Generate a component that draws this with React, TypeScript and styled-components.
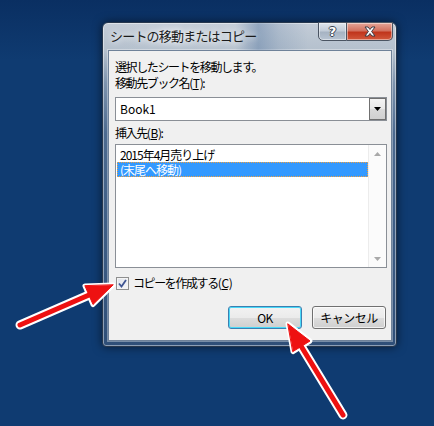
import React from "react";
import styled, { createGlobalStyle } from "styled-components";

const Global = createGlobalStyle`
  html, body { margin: 0; padding: 0; background: #0f3b71; }
  body { font-family: "Noto Sans CJK JP", "Noto Sans", sans-serif; }
`;

const Desktop = styled.div`
  position: relative;
  width: 434px;
  height: 426px;
  overflow: hidden;
  background: linear-gradient(to bottom, #0a2f62 0px, #0f3b71 60px, #0f3b71 100%);
  padding: 22px 0 0 102px;
  box-sizing: border-box;
`;

const Window = styled.div`
  width: 295px;
  height: 325px;
  box-sizing: border-box;
  display: flex;
  flex-direction: column;
  border: 1px solid #26374d;
  border-radius: 6px 6px 4px 4px;
  background: linear-gradient(
    to bottom,
    #c3ccd7 0px,
    #b4c0cd 28px,
    #7d93ad 60px,
    #4d6b90 110px,
    #3e5e86 200px,
    #2f4f78 100%
  );
  box-shadow: 0 0 10px rgba(0, 0, 0, 0.55), inset 0 0 0 1px rgba(255, 255, 255, 0.45);
  padding: 0 4px 5px 5px;
`;

const TitleBar = styled.div`
  height: 27px;
  display: flex;
  align-items: flex-start;
  position: relative;
  background: linear-gradient(
    to right,
    rgba(255, 255, 255, 0) 0%,
    rgba(255, 255, 255, 0.05) 45%,
    rgba(60, 100, 150, 0.35) 53%,
    rgba(60, 100, 150, 0.15) 60%,
    rgba(255, 255, 255, 0) 70%
  );
  margin: 0 -4px 0 -5px;
  padding: 0 3px 0 5px;
`;

const Title = styled.div`
  flex: 1;
  padding: 5px 0 0 2px;
  font-size: 13px;
  line-height: 16px;
  color: #1b1b1b;
  letter-spacing: -0.8px;
  text-shadow: 0 0 6px #ffffff, 0 0 10px #ffffff;
`;

const CaptionButtons = styled.div`
  display: flex;
  margin-top: -1px;
`;

const CaptionButton = styled.div<{ $close?: boolean }>`
  width: ${(p) => (p.$close ? 46 : 29)}px;
  height: 19px;
  box-sizing: border-box;
  display: flex;
  align-items: center;
  justify-content: center;
  border: 1px solid #4a5462;
  border-left-width: ${(p) => (p.$close ? 0 : 1)}px;
  border-radius: ${(p) => (p.$close ? "0 0 5px 0" : "0 0 0 5px")};
  background: ${(p) =>
    p.$close
      ? "linear-gradient(to bottom, #e4a597 0%, #d2715f 45%, #c0351c 55%, #d2583c 100%)"
      : "linear-gradient(to bottom, #dfe5ec 0%, #c2ccd8 45%, #a6b3c3 55%, #b8c4d2 100%)"};
  box-shadow: inset 0 0 0 1px rgba(255, 255, 255, 0.45);
  color: #ffffff;
  font-family: "DejaVu Sans", sans-serif;
  font-weight: bold;
  font-size: 13px;
  line-height: 13px;
  text-shadow: 1px 0 0 #3a4350, -1px 0 0 #3a4350, 0 1px 0 #3a4350, 0 -1px 0 #3a4350;
`;

const Client = styled.div`
  flex: 1;
  display: flex;
  flex-direction: column;
  background: #f0f0f0;
  border: 1px solid #6f8299;
  box-shadow: 0 0 0 1px rgba(255, 255, 255, 0.35);
  padding: 8px 4px 0 6px;
  font-size: 12px;
  color: #000;
`;

const Label = styled.div<{ $mt?: number }>`
  height: 16px;
  line-height: 16px;
  letter-spacing: -1.4px;
  margin-top: ${(p) => p.$mt ?? 0}px;
  white-space: nowrap;
`;

const U = styled.span`
  text-decoration: underline;
  padding: 0 1px;
`;

const Combo = styled.div`
  margin-top: 6px;
  height: 24px;
  box-sizing: border-box;
  border: 1px solid #8a8f96;
  background: #ffffff;
  display: flex;
  align-items: stretch;
  padding: 0 0 0 4px;
`;

const ComboText = styled.div`
  flex: 1;
  line-height: 22px;
  font-size: 12px;
`;

const DropButton = styled.div`
  width: 17px;
  box-sizing: border-box;
  border: 1px solid #707070;
  background: linear-gradient(to bottom, #f4f4f4 0%, #e8e8e8 50%, #dadada 51%, #d0d0d0 100%);
  display: flex;
  align-items: center;
  justify-content: center;
`;

const ListBox = styled.div`
  margin-top: 3px;
  height: 124px;
  box-sizing: border-box;
  border: 1px solid #8a8f96;
  background: #ffffff;
  display: flex;
`;

const Items = styled.div`
  flex: 1;
  padding: 2px 0 0 1px;
`;

const Item = styled.div<{ $selected?: boolean }>`
  height: 15px;
  box-sizing: border-box;
  line-height: 13px;
  overflow: hidden;
  padding-left: 2px;
  letter-spacing: -1px;
  white-space: nowrap;
  color: ${(p) => (p.$selected ? "#ffffff" : "#000000")};
  background: ${(p) => (p.$selected ? "#3399ff" : "transparent")};
  border: 1px ${(p) => (p.$selected ? "dotted #f0a040" : "solid transparent")};
`;

const ScrollBar = styled.div`
  width: 17px;
  background: #fbfbfb;
  border-left: 1px solid #ececec;
  display: flex;
  flex-direction: column;
  justify-content: space-between;
`;

const ScrollArrow = styled.div`
  height: 17px;
  display: flex;
  align-items: center;
  justify-content: center;
`;

const CheckRow = styled.div`
  margin-top: 7px;
  height: 16px;
  display: flex;
  align-items: center;
  gap: 4px;
  padding-left: 1px;
`;

const CheckBox = styled.div`
  width: 13px;
  height: 13px;
  box-sizing: border-box;
  border: 1px solid #8e8f8f;
  background: linear-gradient(135deg, #dfe3ea 0%, #f6f7f9 100%);
  box-shadow: inset 0 0 0 1px #f4f4f4;
  display: flex;
  align-items: center;
  justify-content: center;
`;

const ButtonRow = styled.div`
  margin-top: 15px;
  display: flex;
  justify-content: flex-end;
  gap: 10px;
  padding-right: 1px;
`;

const Button = styled.div<{ $default?: boolean }>`
  width: 74px;
  height: 23px;
  box-sizing: border-box;
  border: 1px solid ${(p) => (p.$default ? "#3c7fb1" : "#707070")};
  border-radius: 3px;
  background: linear-gradient(to bottom, #f2f2f2 0%, #ebebeb 50%, #dddddd 51%, #cfcfcf 100%);
  box-shadow: inset 0 0 0 1px ${(p) => (p.$default ? "#48d9f8" : "rgba(255,255,255,0.7)")};
  display: flex;
  align-items: center;
  justify-content: center;
  font-size: 12px;
  letter-spacing: -0.5px;
`;

const Overlay = styled.svg`
  position: absolute;
  left: 0;
  top: 0;
  pointer-events: none;
`;

function Arrow({ tx, ty, bx, by, c1x, c1y, c2x, c2y, sx, sy }: {
  tx: number; ty: number; bx: number; by: number;
  c1x: number; c1y: number; c2x: number; c2y: number; sx: number; sy: number;
}) {
  const head = `${tx},${ty} ${c1x},${c1y} ${c2x},${c2y}`;
  return (
    <g strokeLinecap="round" strokeLinejoin="round">
      <line x1={sx} y1={sy} x2={bx} y2={by} stroke="#ffffff" strokeWidth={9} />
      <polygon points={head} fill="#ffffff" stroke="#ffffff" strokeWidth={5} />
      <line x1={sx} y1={sy} x2={bx} y2={by} stroke="#ee1111" strokeWidth={5} />
      <polygon points={head} fill="#ee1111" stroke="#ee1111" strokeWidth={1} />
    </g>
  );
}

export default function App() {
  return (
    <>
      <Global />
      <Desktop>
        <Window>
          <TitleBar>
            <Title>シートの移動またはコピー</Title>
            <CaptionButtons>
              <CaptionButton>?</CaptionButton>
              <CaptionButton $close>
                <svg width="14" height="11" viewBox="0 0 14 11">
                  <path
                    d="M2 1 L5 1 L7 3.5 L9 1 L12 1 L8.6 5.5 L12 10 L9 10 L7 7.5 L5 10 L2 10 L5.4 5.5 Z"
                    fill="#ffffff"
                    stroke="#3a3a44"
                    strokeWidth="1"
                    strokeLinejoin="round"
                  />
                </svg>
              </CaptionButton>
            </CaptionButtons>
          </TitleBar>
          <Client>
            <Label>選択したシートを移動します。</Label>
            <Label>
              移動先ブック名(<U>T</U>):
            </Label>
            <Combo>
              <ComboText>Book1</ComboText>
              <DropButton>
                <svg width="7" height="4" viewBox="0 0 7 4">
                  <path d="M0 0 H7 L3.5 4 Z" fill="#000" />
                </svg>
              </DropButton>
            </Combo>
            <Label $mt={4}>
              挿入先(<U>B</U>):
            </Label>
            <ListBox>
              <Items>
                <Item>2015年4月売り上げ</Item>
                <Item $selected>(末尾へ移動)</Item>
              </Items>
              <ScrollBar>
                <ScrollArrow>
                  <svg width="7" height="4" viewBox="0 0 7 4">
                    <path d="M0 4 H7 L3.5 0 Z" fill="#a9a9a9" />
                  </svg>
                </ScrollArrow>
                <ScrollArrow>
                  <svg width="7" height="4" viewBox="0 0 7 4">
                    <path d="M0 0 H7 L3.5 4 Z" fill="#a9a9a9" />
                  </svg>
                </ScrollArrow>
              </ScrollBar>
            </ListBox>
            <CheckRow>
              <CheckBox>
                <svg width="9" height="9" viewBox="0 0 9 9">
                  <path d="M1 4.5 L3.5 7.5 L8 1" fill="none" stroke="#3f5592" strokeWidth="1.8" />
                </svg>
              </CheckBox>
              <Label>
                コピーを作成する(<U>C</U>)
              </Label>
            </CheckRow>
            <ButtonRow>
              <Button $default>OK</Button>
              <Button>キャンセル</Button>
            </ButtonRow>
          </Client>
        </Window>
        <Overlay width="434" height="426" viewBox="0 0 434 426">
          <Arrow sx={20} sy={325} tx={113} ty={285} bx={89} by={295} c1x={93} c1y={304.5} c2x={85} c2y={286} />
          <Arrow sx={343} sy={415} tx={288} ty={324} bx={301} by={346} c1x={310} c1y={341} c2x={293} c2y={351.5} />
        </Overlay>
      </Desktop>
    </>
  );
}
